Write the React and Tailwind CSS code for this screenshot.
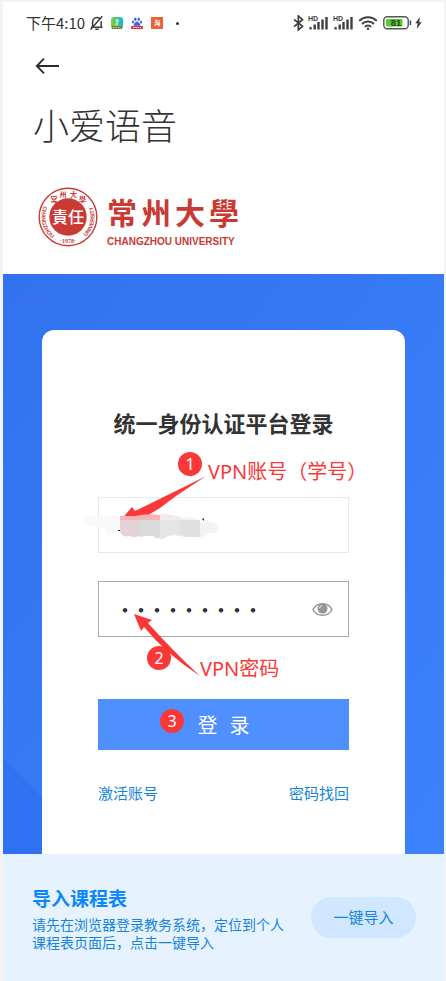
const RED = "#fb3838";

function Badge({ n, className }) {
  return (
    <span
      className={`pointer-events-none absolute flex size-6 items-center justify-center rounded-full bg-[#fb3838] font-['Noto_Sans',sans-serif] text-base leading-none text-white ${className}`}
    >
      {n}
    </span>
  );
}

function Note({ children, className }) {
  return (
    <span
      className={`pointer-events-none absolute font-['Noto_Sans','Noto_Sans_CJK_SC',sans-serif] text-xl leading-7 whitespace-nowrap text-[#fb3838] ${className}`}
    >
      {children}
    </span>
  );
}

function Signal() {
  return (
    <svg width="21" height="16" viewBox="0 0 21 16" fill="#3f3f3f">
      <text x="0" y="5.500" fontSize="7" fontWeight="700" fontFamily="Liberation Sans, sans-serif">HD</text>
      <rect x="1.500" y="12" width="2.200" height="2.500" />
      <rect x="5.500" y="9.500" width="2.400" height="5" />
      <rect x="9.300" y="7" width="2.400" height="7.500" />
      <rect x="13.300" y="4.500" width="2.400" height="10" />
      <rect x="17.300" y="2" width="2.400" height="12.500" />
    </svg>
  );
}

function StatusBar() {
  return (
    <div className="flex h-[42px] items-center justify-between pr-[22px] pl-[23px] text-[#333]">
      <div className="flex items-center">
        <span className="text-[15px] leading-5">下午4:10</span>
        <svg className="ml-1" width="16" height="16" viewBox="0 0 16 16" fill="none" stroke="#3c3c3c" strokeWidth="1.500">
          <path d="M2 12.200h11.500M3.600 12V6.600a4.300 4.300 0 0 1 7-3.200M12.200 6.200V12M6.300 14.300h3.400M1.500 14.500 13.300 1.200" />
        </svg>
        <svg className="ml-[6px]" width="12" height="13" viewBox="0 0 12 13">
          <defs>
            <linearGradient id="leaf" x1="0" x2="1">
              <stop offset="0" stopColor="#7bcf3a" />
              <stop offset="1" stopColor="#14b9dc" />
            </linearGradient>
          </defs>
          <rect width="12" height="12" rx="3" fill="url(#leaf)" />
          <path d="M6 2v7M4.500 4c0-2 3-2 3 0s-3 2-3 4" stroke="#d8f7c8" fill="none" />
          <path d="M1 10.500h10" stroke="#7a6a20" strokeWidth="2.400" />
          <path d="M2 10.500h8" stroke="#f5e04c" strokeWidth="1.200" strokeDasharray="1.500 1" />
        </svg>
        <svg className="ml-2" width="12" height="13" viewBox="0 0 12 13">
          <g fill="#3b62e0">
            <ellipse cx="4.300" cy="2.300" rx="1.200" ry="1.700" />
            <ellipse cx="7.700" cy="2.300" rx="1.200" ry="1.700" />
            <ellipse cx="2" cy="5" rx="1.100" ry="1.600" />
            <ellipse cx="10" cy="5" rx="1.100" ry="1.600" />
            <path d="M6 4.500c-1.500 0-3.500 2.500-3.500 4.300h7C9.500 7 7.500 4.500 6 4.500Z" />
          </g>
          <rect y="9" width="12" height="3" rx="1" fill="#e02a3c" />
          <path d="M2 10.500h8" stroke="#fff" strokeDasharray="1.500 .8" />
        </svg>
        <span className="ml-2 flex size-3 items-center justify-center bg-[#ea6237] text-[6px] leading-none font-bold text-white">淘</span>
        <span className="ml-[13px] size-[3px] rounded-full bg-[#333]" />
      </div>
      <div className="flex items-center">
        <svg width="11" height="16" viewBox="0 0 11 16" fill="none" stroke="#3f3f3f" strokeWidth="1.700">
          <path d="m1 4.300 8.500 7L5.300 15V1l4.200 3.700L1 11.700" />
        </svg>
        <div className="ml-1 flex gap-1">
          <Signal />
          <Signal />
        </div>
        <svg className="ml-1" width="20" height="14" viewBox="0 0 20 14" fill="none" stroke="#3f3f3f" strokeWidth="1.900">
          <path d="M1.200 4.800a12.500 12.500 0 0 1 17.600 0M4 8a8.500 8.500 0 0 1 12 0M6.800 10.800a4.500 4.500 0 0 1 6.400 0" />
          <circle cx="10" cy="12.800" r="1.200" fill="#3f3f3f" stroke="none" />
        </svg>
        <svg className="ml-[5px]" width="29" height="14" viewBox="0 0 29 14">
          <rect x=".8" y=".8" width="24.400" height="11.900" rx="3.500" fill="#fff" stroke="#555" strokeWidth="1.400" />
          <rect x="3" y="3" width="16.500" height="7.500" rx="1" fill="#55cc2b" />
          <path d="M27.400 4.500v4.500" stroke="#444" strokeWidth="1.500" />
          <text x="13" y="10.300" textAnchor="middle" fontSize="9.500" fontWeight="700" fill="#26441f" fontFamily="Liberation Sans, sans-serif">81</text>
        </svg>
        <svg className="ml-[3px]" width="7" height="12" viewBox="0 0 7 12">
          <path d="M4.800 0 .3 6.200h2.300L1.800 12l4.900-6.800H4.300Z" fill="#3f3f3f" />
        </svg>
      </div>
    </div>
  );
}

function Seal() {
  return (
    <svg width="62" height="62" viewBox="0 0 62 62" role="img" aria-label="常州大学校徽" fill="#c93a35">
      <defs>
        <path id="arc-ring" d="M31 4.500a26.500 26.500 0 0 0 0 53a26.500 26.500 0 0 0 0-53" />
      </defs>
      <circle cx="31" cy="31" r="28.800" fill="none" stroke="#c93a35" strokeWidth="1.400" />
      <circle cx="31" cy="31" r="18.700" />
      <g fontSize="7" fontWeight="700" fontFamily="Noto Sans CJK TC, sans-serif" textAnchor="middle">
        <text x="17" y="15.500">常</text>
        <text x="26" y="11">州</text>
        <text x="36.500" y="11">大</text>
        <text x="45.500" y="15.500">學</text>
      </g>
      <g fontSize="5.500" fontWeight="700" fontFamily="Liberation Sans, sans-serif">
        <text>
          <textPath href="#arc-ring" startOffset="30">CHANGZHOU</textPath>
        </text>
        <text>
          <textPath href="#arc-ring" startOffset="102">UNIVERSITY</textPath>
        </text>
      </g>
      <text x="31" y="56.500" textAnchor="middle" fontSize="6" fontWeight="700" fontFamily="Liberation Serif, serif">·1978·</text>
      <text x="31" y="37" textAnchor="middle" fontSize="16" fontWeight="500" fill="#fff" fontFamily="Noto Sans CJK TC, sans-serif">責任</text>
    </svg>
  );
}

function EyeIcon() {
  return (
    <svg width="21" height="15" viewBox="0 0 21 15">
      <path d="M1 7.500C5-.2 16-.2 20 7.500 16 15.200 5 15.200 1 7.500Z" fill="none" stroke="#959595" strokeWidth="1.500" />
      <circle cx="10.500" cy="6.600" r="5" fill="#959595" />
      <path d="M7.700 6.300c0-1.700 1-2.500 2.300-2.700" fill="none" stroke="#fff" strokeWidth="1" />
    </svg>
  );
}

function LoginForm() {
  return (
    <form className="relative mx-[39px] flex-1 rounded-t-xl bg-white px-14 pt-[78px]" onSubmit={(e) => e.preventDefault()}>
      <h2 className="text-center text-[22px] leading-7 font-bold whitespace-nowrap text-[#333]">统一身份认证平台登录</h2>

      <div className="relative mt-[61px]">
        <input aria-label="账号" type="text" className="block h-14 w-full border border-[#e8e8e8] bg-white px-5 text-base outline-none" />
        <svg className="pointer-events-none absolute top-0 left-0 overflow-visible" width="120" height="56" viewBox="0 0 120 56">
          <path d="M108-21C84-9 60 3 37 14l-3-4-12 14h14q6-1 11-4L62 11 78-1Z" fill={RED} />
          <g>
            <path d="M-11 19H22V31H16v5q-5 4-8 0l-3-6-16-1q-6-5 0-10Z" fill="#f9f9f9" />
            <path d="M22 19h15q12-3 25-1v6H22Z" fill="#f8b2b5" />
            <path d="M62 17q12 0 23 4v3H62Z" fill="#f5eaea" />
            <path d="M22 23H42V39q-6 2-11 0-7 2-9-5Z" fill="#e3d3d6" />
            <path d="M42 23H62V41H57q-1-4-15-1Z" fill="#dadada" />
            <path d="M62 23H82V39q-9-2-14 1-3 3-6 2Z" fill="#e5e5e5" />
            <path d="M82 23h20V40H90q-6 0-8-2Z" fill="#e0e0e0" />
            <path d="M102 26q5-3 9-1 9 0 9 6t-9 5q-4 4-9 4Z" fill="#f3f3f3" />
            <path d="M82 23v-2q13-2 18 2Z" fill="#f3f3f3" />
          </g>
          <path d="M104 21.500h2v2h-1v-1h-1ZM20 33h2v1h-2Z" fill="#222" />
        </svg>
        <Badge n={1} className="-top-[45px] left-20" />
        <Note className="-top-[39px] left-[110px]">VPN账号（学号）</Note>
      </div>

      <div className="relative mt-7">
        <input
          aria-label="密码"
          type="password"
          defaultValue="123456789"
          className="block h-14 w-full border border-[#ababab] bg-white pr-12 pl-[18px] font-['Noto_Sans_CJK_SC',sans-serif] text-base font-black text-[#333] outline-none"
        />
        <button type="button" aria-label="显示密码" className="absolute top-[21px] right-4">
          <EyeIcon />
        </button>
        <svg className="pointer-events-none absolute top-0 left-0 overflow-visible" width="120" height="56" viewBox="0 0 120 56">
          <path d="M36 33 54 39l-4 3Q75 70 102 95 68 73 46 46l-3 4Z" fill={RED} />
        </svg>
        <Badge n={2} className="top-[65px] left-[49px]" />
        <Note className="top-[74px] left-[102px]">VPN密码</Note>
      </div>

      <button type="submit" className="relative mt-[62px] flex h-[51px] w-full items-center justify-center gap-3 bg-[#4f8fff] text-xl text-white">
        <span>登</span>
        <span>录</span>
        <Badge n={3} className="top-[10px] left-[62px]" />
      </button>

      <div className="mt-[31px] flex justify-between text-[15px] leading-6 whitespace-nowrap text-[#1684dc]">
        <a href="#activate">激活账号</a>
        <a href="#recover">密码找回</a>
      </div>
    </form>
  );
}

export default function App() {
  return (
    <div className="min-h-screen bg-[#f3f3f3] pt-[2px] pr-[2px] pl-[3px] font-['Noto_Sans_CJK_SC',sans-serif]">
      <div className="flex min-h-[calc(100vh-2px)] flex-col bg-white">
        <header>
          <StatusBar />
          <div className="px-[30px] pb-[26px]">
            <button type="button" aria-label="返回" className="flex h-11 items-center">
              <svg width="30" height="20" viewBox="0 0 30 20" fill="none" stroke="#2b2b2b" strokeWidth="1.800">
                <path d="M26 10H4M11 2.700 3.800 10l7.200 7.300" />
              </svg>
            </button>
            <h1 className="mt-4 mb-[42px] text-4xl leading-10 font-light text-[#333]">小爱语音</h1>
            <div className="flex items-start gap-2 pl-1 text-[#c93a35]">
              <Seal />
              <div className="flex flex-col">
                <div className="flex h-[50px] items-center gap-1 font-['Noto_Sans_CJK_TC',sans-serif] text-[30px] leading-none font-bold">
                  <span>常</span>
                  <span>州</span>
                  <span>大</span>
                  <span>學</span>
                </div>
                <span className="font-['Liberation_Sans',sans-serif] text-[10px] leading-3 font-bold whitespace-nowrap">CHANGZHOU UNIVERSITY</span>
              </div>
            </div>
          </div>
        </header>

        <main className="relative flex flex-1 flex-col bg-linear-to-br from-[#3272ee] to-[#3c82fc] pt-14">
          <svg className="absolute bottom-0 left-0" width="100" height="96" viewBox="0 0 100 96" aria-hidden="true">
            <path d="M0 0 96 96H0Z" fill="#2e71f2" />
          </svg>
          <LoginForm />
        </main>

        <footer className="flex items-center justify-between bg-[#e6f3ff] py-[30px] pr-7 pl-[29px] text-[#1684dc]">
          <div>
            <h3 className="text-[19px] leading-7 font-bold text-[#0c86fb]">导入课程表</h3>
            <p className="mt-[3px] max-w-[254px] text-sm leading-[18px]">请先在浏览器登录教务系统，定位到个人课程表页面后，点击一键导入</p>
          </div>
          <button type="button" className="h-[41px] w-[105px] shrink-0 rounded-full bg-[#d1e7ff] text-[15px]">一键导入</button>
        </footer>
      </div>
    </div>
  );
}
